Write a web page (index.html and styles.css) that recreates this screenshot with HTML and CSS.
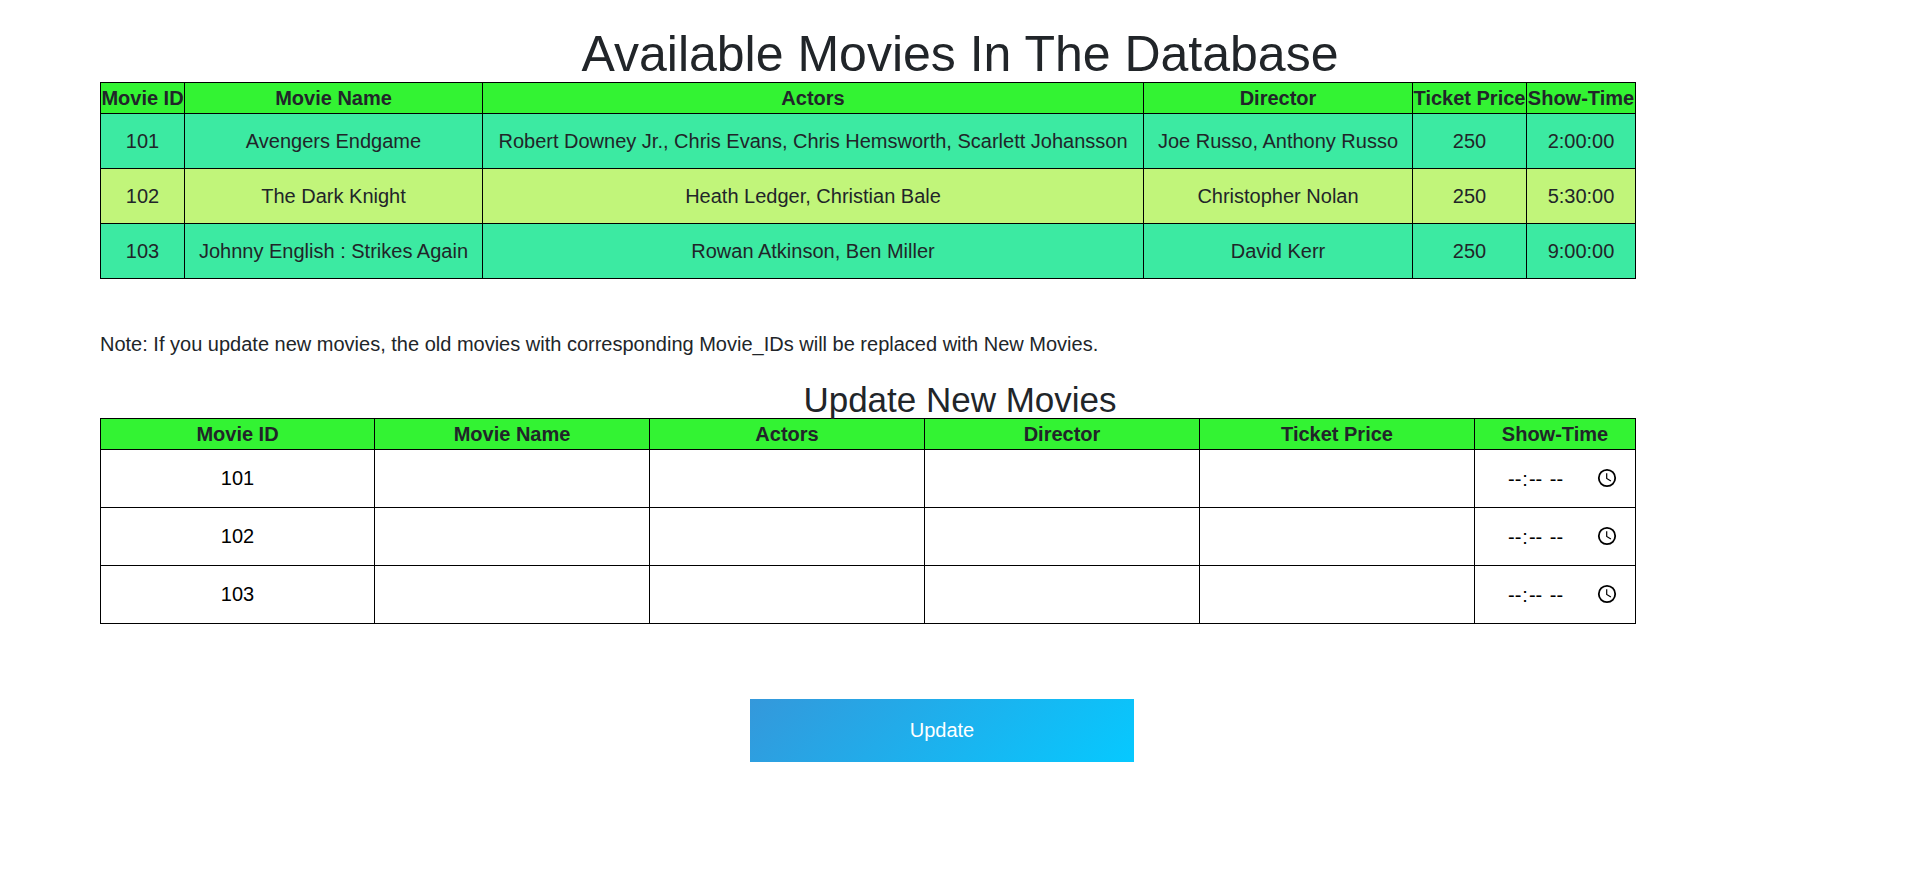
FILE: index.html
```html
<!DOCTYPE html>
<html lang="en">
<head>
<meta charset="utf-8">
<title>Update Movies</title>
<link rel="stylesheet" href="styles.css">
</head>
<body>
<svg class="defs" width="0" height="0" aria-hidden="true">
  <symbol id="clock" viewBox="0 0 20 20">
    <circle cx="10" cy="10" r="8.2" fill="none" stroke="#000" stroke-width="1.8"/>
    <path d="M9.7 5.2v5.2l4.2 2.6" fill="none" stroke="#000" stroke-width="1.2"/>
  </symbol>
</svg>
<h1 class="title">Available Movies In The Database</h1>
<table class="movies">
  <colgroup><col class="m-id"><col class="m-name"><col class="m-actors"><col class="m-director"><col class="m-price"><col class="m-time"></colgroup>
  <tr><th>Movie ID</th><th>Movie Name</th><th>Actors</th><th>Director</th><th>Ticket Price</th><th>Show-Time</th></tr>
  <tr class="odd"><td>101</td><td>Avengers Endgame</td><td>Robert Downey Jr., Chris Evans, Chris Hemsworth, Scarlett Johansson</td><td>Joe Russo, Anthony Russo</td><td>250</td><td>2:00:00</td></tr>
  <tr class="even"><td>102</td><td>The Dark Knight</td><td>Heath Ledger, Christian Bale</td><td>Christopher Nolan</td><td>250</td><td>5:30:00</td></tr>
  <tr class="odd"><td>103</td><td>Johnny English : Strikes Again</td><td>Rowan Atkinson, Ben Miller</td><td>David Kerr</td><td>250</td><td>9:00:00</td></tr>
</table>
<p class="note">Note: If you update new movies, the old movies with corresponding Movie_IDs will be replaced with New Movies.</p>
<h2 class="subtitle">Update New Movies</h2>
<form>
<table class="movies update">
  <colgroup><col class="u-id"><col class="u-col"><col class="u-col"><col class="u-col"><col class="u-col"><col class="u-time"></colgroup>
  <tr><th>Movie ID</th><th>Movie Name</th><th>Actors</th><th>Director</th><th>Ticket Price</th><th>Show-Time</th></tr>
  <tr><td class="id">101</td><td><input class="field" type="text"></td><td><input class="field" type="text"></td><td><input class="field" type="text"></td><td><input class="field" type="text"></td><td><div class="time"><span class="part">--</span>:<span class="part">--</span>&nbsp;<span class="part">--</span><svg class="clock"><use href="#clock"/></svg></div></td></tr>
  <tr><td class="id">102</td><td><input class="field" type="text"></td><td><input class="field" type="text"></td><td><input class="field" type="text"></td><td><input class="field" type="text"></td><td><div class="time"><span class="part">--</span>:<span class="part">--</span>&nbsp;<span class="part">--</span><svg class="clock"><use href="#clock"/></svg></div></td></tr>
  <tr><td class="id">103</td><td><input class="field" type="text"></td><td><input class="field" type="text"></td><td><input class="field" type="text"></td><td><input class="field" type="text"></td><td><div class="time"><span class="part">--</span>:<span class="part">--</span>&nbsp;<span class="part">--</span><svg class="clock"><use href="#clock"/></svg></div></td></tr>
</table>
<button class="submit" type="button">Update</button>
</form>
</body>
</html>
```
FILE: styles.css
```css
* { box-sizing: border-box; }
body {
  margin: 0;
  padding-top: 24px;
  background: #fff;
  color: #212529;
  font: 20px/30px "Liberation Sans", Arial, sans-serif;
}
.defs { display: block; height: 0; }
.title, .subtitle { margin: 0; text-align: center; font-weight: 400; }
.title { font-size: 50px; line-height: 60px; height: 58px; }
.movies {
  margin-left: 100px;
  width: 1536px;
  table-layout: fixed;
  border-collapse: collapse;
  text-align: center;
}
.movies th, .movies td { border: 1px solid #000; padding: 0; white-space: nowrap; }
.movies th { height: 31px; background: #33f333; font-weight: 700; }
.movies td { height: 55px; }
.odd { background: #3ceaa2; }
.even { background: #c1f57a; }
.m-id { width: 84px; }
.m-name { width: 298px; }
.m-actors { width: 661px; }
.m-director { width: 269px; }
.m-price { width: 114px; }
.m-time { width: 109px; }
.note { margin: 50px 0 0 100px; }
.subtitle { margin-top: 20px; font-size: 35px; line-height: 42px; height: 39px; }
.update td { height: 58px; color: #000; }
.update .id { padding-bottom: 2px; }
.u-id { width: 274px; }
.u-col { width: 275px; }
.u-time { width: 161px; }
.field {
  display: block;
  width: 100%;
  height: 50px;
  border: 0;
  outline: 0;
  background: none;
  font: inherit;
  text-align: center;
}
.time { display: flex; align-items: center; padding: 0 18px 0 32px; }
.part { padding: 0 1px; }
.clock { width: 20px; height: 20px; margin: 0 0 1px auto; }
.submit {
  display: block;
  width: 384px;
  height: 63px;
  margin: 75px 0 0 750px;
  border: 0;
  padding: 0 0 2px;
  background: linear-gradient(135deg, #3498db, #06c9ff);
  color: #fff;
  font: inherit;
}
```
